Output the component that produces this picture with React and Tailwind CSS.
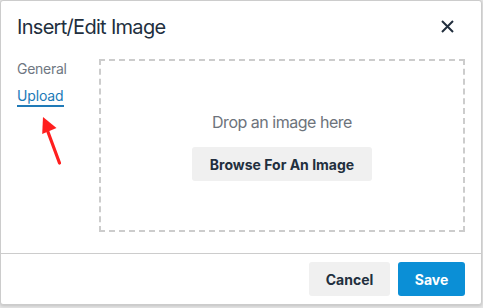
export default function App() {
  return (
    <div className="h-[308px] w-[483px] overflow-hidden bg-[#e4e4e4] font-['Inter',sans-serif]">
      <div className="relative flex h-[305px] w-[482px] flex-col rounded-[3px] border border-[#cccccc] bg-white shadow-[0_1px_3px_rgba(0,0,0,0.15)]">
        <div className="flex h-[51px] items-center justify-between pl-4 pr-[26px]">
          <h1 className="text-[20px] leading-[28px] tracking-[-0.035em] text-[#222f3e]">Insert/Edit Image</h1>
          <button type="button" className="flex h-4 w-4 items-center justify-center text-[#222f3e]">
            <svg width="13" height="13" viewBox="0 0 13 13" fill="none">
              <path d="M1 1l11 11M12 1L1 12" stroke="currentColor" strokeWidth="2" />
            </svg>
          </button>
        </div>

        <div className="flex pb-[21px] pl-4 pr-4 pt-[7px]">
          <div className="flex w-[82px] flex-col items-start">
            <span className="text-[14px] leading-[20px] tracking-[-0.02em] text-[#6f7782]">General</span>
            <span className="mt-2 border-b-2 border-[#207ab7] text-[14px] leading-[18px] tracking-[-0.01em] text-[#207ab7]">
              Upload
            </span>
          </div>
          <div className="flex h-[173px] flex-1 flex-col items-center justify-center border-2 border-dashed border-[#cccccc]">
            <p className="text-[16px] leading-[24px] tracking-[-0.03em] text-[#6d737b]">Drop an image here</p>
            <button
              type="button"
              className="mt-[13px] h-[34px] w-[180px] rounded-[3px] bg-[#f0f0f0] text-[14px] font-bold text-[#222f3e]"
            >
              Browse For An Image
            </button>
          </div>
        </div>

        <div className="flex justify-end gap-2 border-t border-[#cccccc] px-4 py-2">
          <button
            type="button"
            className="h-[34px] w-[81px] rounded-[3px] bg-[#f0f0f0] text-[14px] font-bold text-[#222f3e]"
          >
            Cancel
          </button>
          <button
            type="button"
            className="h-[34px] w-[67px] rounded-[3px] bg-[#0b8fd6] text-[14px] font-bold text-white"
          >
            Save
          </button>
        </div>

        <svg
          className="pointer-events-none absolute left-[32px] top-[112px]"
          width="36"
          height="56"
          viewBox="0 0 36 56"
          fill="none"
        >
          <path d="M26.5 50L15 19" stroke="#ff1f1f" strokeWidth="3.2" strokeLinecap="round" />
          <path d="M10 4L9.2 21L23.5 15Z" fill="#ff1f1f" />
        </svg>
      </div>
    </div>
  )
}
